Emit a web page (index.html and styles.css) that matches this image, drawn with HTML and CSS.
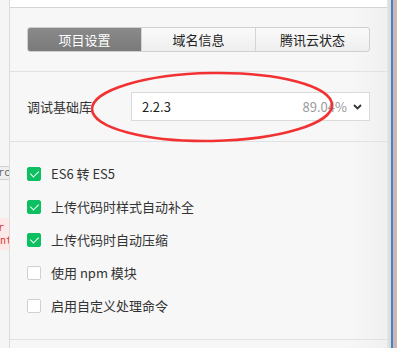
FILE: index.html
```html
<!DOCTYPE html>
<html lang="zh-CN">
<head>
    <meta charset="UTF-8">
    <title>项目设置</title>
    <link rel="stylesheet" href="styles.css">
</head>
<body>

    <!-- Editor strip peeking out on the left -->
    <div class="side">
        <div class="side-tab">rc</div>
        <div class="side-error">r<br>nt</div>
    </div>

    <!-- Settings panel -->
    <div class="panel">
        <div class="panel-top"></div>

        <div class="section tabs-section">
            <div class="tabs">
                <div class="tab active">项目设置</div>
                <div class="tab">域名信息</div>
                <div class="tab">腾讯云状态</div>
            </div>
        </div>

        <div class="section lib-section">
            <div class="lib-label">调试基础库</div>
            <div class="select">
                <span class="select-value">2.2.3</span>
                <span class="select-share">89.04%</span>
                <svg class="chevron" width="9" height="6" viewBox="0 0 9 6">
                    <path d="M1 1 L4.5 4.5 L8 1" fill="none" stroke="#333" stroke-width="1.8"/>
                </svg>
            </div>
        </div>

        <div class="section options">
            <label class="option"><span class="box checked"></span>ES6 转 ES5</label>
            <label class="option"><span class="box checked"></span>上传代码时样式自动补全</label>
            <label class="option"><span class="box checked"></span>上传代码时自动压缩</label>
            <label class="option"><span class="box"></span>使用 npm 模块</label>
            <label class="option"><span class="box"></span>启用自定义处理命令</label>
        </div>
    </div>

    <!-- Window edge -->
    <div class="edge">
        <div class="edge-shade"></div>
        <div class="edge-blue"></div>
        <div class="edge-pink"></div>
    </div>

    <!-- Red annotation circle drawn over the screenshot -->
    <svg class="mark" width="397" height="348" viewBox="0 0 397 348">
        <ellipse cx="212" cy="107" rx="120" ry="34" fill="none" stroke="#f23232" stroke-width="2.6" transform="rotate(-1 212 107)"/>
    </svg>

</body>
</html>
```

FILE: styles.css
```css
/* Reset */
* {
    margin: 0;
    padding: 0;
    box-sizing: border-box;
}

body {
    width: 397px;
    height: 348px;
    overflow: hidden;
    display: flex;
    position: relative;
    background-color: #fff;
    font-family: "Microsoft YaHei", "Noto Sans CJK SC", "Noto Sans", sans-serif;
    font-size: 13px;
    color: #333;
}

/* Left editor strip */
.side {
    width: 10px;
    background-color: #f5f5f5;
    border-right: 1px solid #dcdcdc;
    overflow: hidden;
    padding-top: 166px;
}

.side-tab {
    height: 14px;
    border-top: 1px solid #d0d0d0;
    border-bottom: 1px solid #d0d0d0;
    background-color: #eeeeee;
    color: #666;
    font-family: "DejaVu Sans Mono", monospace;
    font-size: 10px;
    line-height: 12px;
    text-indent: -2px;
}

.side-error {
    margin-top: 38px;
    height: 32px;
    background-color: #fde8e8;
    color: #d33;
    font-family: "DejaVu Sans Mono", monospace;
    font-size: 10px;
    line-height: 13px;
    padding-top: 3px;
    text-indent: -2px;
    white-space: nowrap;
}

/* Panel */
.panel {
    flex: 1;
    background: linear-gradient(to right, #f7f7f7 90%, #f0f0f0);
    display: flex;
    flex-direction: column;
}

.panel-top {
    height: 8px;
    background-color: #fff;
    border-bottom: 1px solid #d4d4d4;
}

.section {
    padding: 0 17px;
    border-bottom: 1px solid #e2e2e2;
}

/* Tabs */
.tabs-section {
    padding-top: 19px;
    padding-bottom: 19px;
}

.tabs {
    display: flex;
    height: 25px;
    border: 1px solid #cfcfcf;
    border-radius: 3px;
    overflow: hidden;
    background: linear-gradient(#fafafa, #eeeeee);
}

.tab {
    flex: 1;
    text-align: center;
    line-height: 23px;
    color: #222;
    border-left: 1px solid #d4d4d4;
}

.tab:first-child {
    border-left: none;
}

.tab.active {
    background: linear-gradient(#8a8a8a, #7a7a7a);
    color: #fff;
}

/* Base library row */
.lib-section {
    display: flex;
    align-items: center;
    padding-top: 20px;
    padding-bottom: 20px;
}

.lib-label {
    width: 104px;
    color: #333;
}

.select {
    flex: 1;
    height: 29px;
    background-color: #fff;
    border: 1px solid #dadada;
    display: flex;
    align-items: center;
    padding: 0 7px 0 10px;
}

.select-value {
    flex: 1;
    color: #222;
    font-size: 13px;
}

.select-share {
    color: #999;
    font-size: 13px;
    margin-right: 6px;
}

/* Options */
.options {
    padding-top: 15px;
    padding-bottom: 17px;
}

.option {
    display: flex;
    align-items: center;
    height: 33px;
    color: #333;
}

.box {
    width: 14px;
    height: 14px;
    margin-right: 10px;
    border: 1px solid #d0d0d0;
    border-radius: 2px;
    background-color: #fff;
    position: relative;
}

.box.checked {
    border-color: #0cc062;
    background-color: #0cc062;
}

.box.checked::after {
    content: "";
    position: absolute;
    left: 3.5px;
    top: 1.5px;
    width: 4px;
    height: 7px;
    border-right: 1.6px solid #fff;
    border-bottom: 1.6px solid #fff;
    transform: rotate(45deg);
}

/* Window edge */
.edge {
    width: 10px;
    display: flex;
}

.edge-shade {
    width: 4px;
    background: linear-gradient(to right, #e6e6e6, #d8d8d8);
}

.edge-blue {
    width: 2px;
    background-color: #3f85c9;
}

.edge-pink {
    flex: 1;
    background-color: #cfb5b3;
}

/* Annotation overlay */
.mark {
    position: absolute;
    left: 0;
    top: 0;
    pointer-events: none;
}
```
